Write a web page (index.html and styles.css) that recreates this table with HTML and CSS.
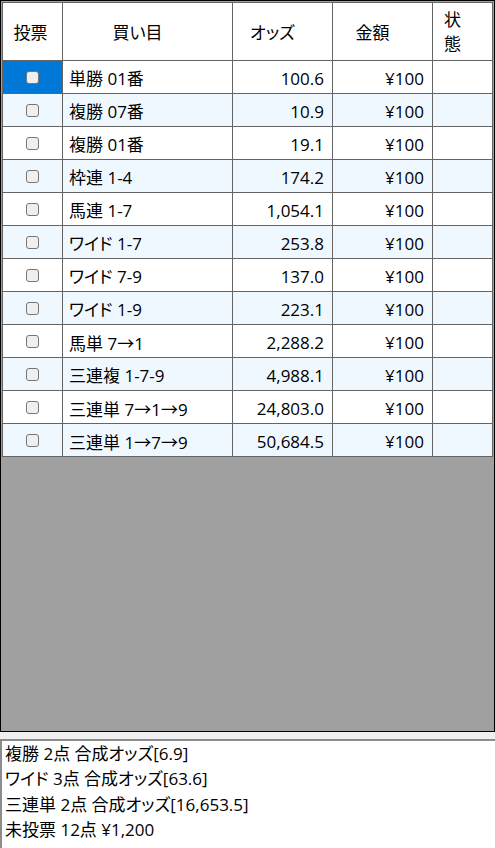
FILE: index.html
```html
<!DOCTYPE html>
<html>
<head>
  <title>投票一覧</title>
  <meta charset="utf-8">
  <meta name="viewport" content="width=device-width, initial-scale=1">
  <link rel="stylesheet" href="styles.css">
</head>
<body>
  <div class="grid-panel">
    <table class="bets">
      <thead>
        <tr>
          <th class="col-vote">投票</th>
          <th class="col-bet">買い目</th>
          <th class="col-odds">オッズ</th>
          <th class="col-amt">金額</th>
          <th class="col-state">状態</th>
        </tr>
      </thead>
      <tbody>
        <tr><td class="vote sel"><input type="checkbox"></td><td class="bet">単勝 01番</td><td class="num">100.6</td><td class="num">¥100</td><td></td></tr>
        <tr><td class="vote"><input type="checkbox"></td><td class="bet">複勝 07番</td><td class="num">10.9</td><td class="num">¥100</td><td></td></tr>
        <tr><td class="vote"><input type="checkbox"></td><td class="bet">複勝 01番</td><td class="num">19.1</td><td class="num">¥100</td><td></td></tr>
        <tr><td class="vote"><input type="checkbox"></td><td class="bet">枠連 1-4</td><td class="num">174.2</td><td class="num">¥100</td><td></td></tr>
        <tr><td class="vote"><input type="checkbox"></td><td class="bet">馬連 1-7</td><td class="num">1,054.1</td><td class="num">¥100</td><td></td></tr>
        <tr><td class="vote"><input type="checkbox"></td><td class="bet">ワイド 1-7</td><td class="num">253.8</td><td class="num">¥100</td><td></td></tr>
        <tr><td class="vote"><input type="checkbox"></td><td class="bet">ワイド 7-9</td><td class="num">137.0</td><td class="num">¥100</td><td></td></tr>
        <tr><td class="vote"><input type="checkbox"></td><td class="bet">ワイド 1-9</td><td class="num">223.1</td><td class="num">¥100</td><td></td></tr>
        <tr><td class="vote"><input type="checkbox"></td><td class="bet">馬単 7<span class="arr">→</span>1</td><td class="num">2,288.2</td><td class="num">¥100</td><td></td></tr>
        <tr><td class="vote"><input type="checkbox"></td><td class="bet">三連複 1-7-9</td><td class="num">4,988.1</td><td class="num">¥100</td><td></td></tr>
        <tr><td class="vote"><input type="checkbox"></td><td class="bet">三連単 7<span class="arr">→</span>1<span class="arr">→</span>9</td><td class="num">24,803.0</td><td class="num">¥100</td><td></td></tr>
        <tr><td class="vote"><input type="checkbox"></td><td class="bet">三連単 1<span class="arr">→</span>7<span class="arr">→</span>9</td><td class="num">50,684.5</td><td class="num">¥100</td><td></td></tr>
      </tbody>
    </table>
  </div>
  <div class="summary">
    <div>複勝 2点 合成オッズ[6.9]</div>
    <div>ワイド 3点 合成オッズ[63.6]</div>
    <div>三連単 2点 合成オッズ[16,653.5]</div>
    <div>未投票 12点 ¥1,200</div>
  </div>
</body>
</html>
```
FILE: styles.css
```css
html, body {
  margin: 0;
  padding: 0;
}
body {
  width: 495px;
  height: 848px;
  display: flex;
  flex-direction: column;
  gap: 7px;
  background-color: #f0f0f0;
  color: #000;
  font-family: "Open Sans", "Noto Sans CJK JP", sans-serif;
  font-size: 17px;
  font-feature-settings: "palt";
}
.grid-panel {
  box-sizing: border-box;
  height: 732px;
  border: 1px solid #000;
  padding: 1px;
  background-color: #a0a0a0;
}
.bets {
  width: 491px;
  table-layout: fixed;
  border-collapse: separate;
  border-spacing: 0;
  border-left: 1px solid #646464;
  border-top: 1px solid #646464;
  background-color: #fff;
}
.bets th, .bets td {
  box-sizing: border-box;
  border-right: 1px solid #646464;
  border-bottom: 1px solid #646464;
  white-space: nowrap;
  overflow: hidden;
}
.bets thead tr {
  height: 58px;
}
.bets tbody tr {
  height: 33px;
}
.bets tbody tr:nth-child(even) {
  background-color: #f0f8ff;
}
.bets th {
  font-weight: normal;
  text-align: center;
  padding: 2px 20px 0 0;
  line-height: 24px;
}
.bets th.col-vote {
  width: 60px;
  padding-right: 4px;
}
.bets th.col-bet {
  width: 170px;
}
.bets th.col-odds,
.bets th.col-amt {
  width: 100px;
}
.bets th.col-state {
  width: 60px;
  text-align: left;
  padding: 0 18px 0 11px;
  white-space: normal;
}
.bets td {
  padding: 4px 0 0 0;
  line-height: 22px;
}
.bets td.bet {
  padding-left: 6px;
}
.bets td.num {
  text-align: right;
  padding-right: 8px;
}
.bets td.vote {
  padding: 0;
  text-align: center;
}
.bets td.sel {
  background-color: #0078d7;
}
.arr {
  font-family: "Noto Sans CJK JP", sans-serif;
  font-feature-settings: normal;
}
.vote input[type="checkbox"] {
  -webkit-appearance: none;
  appearance: none;
  display: block;
  width: 13px;
  height: 13px;
  margin: 0 auto;
  border: 1px solid #767676;
  border-radius: 3px;
  background-color: #efefef;
}
.summary {
  flex: 1;
  background-color: #fff;
  border-top: 2px solid #8c8c8c;
  border-left: 2px solid #8c8c8c;
  padding: 0 3px;
  line-height: 25.3px;
}
```
